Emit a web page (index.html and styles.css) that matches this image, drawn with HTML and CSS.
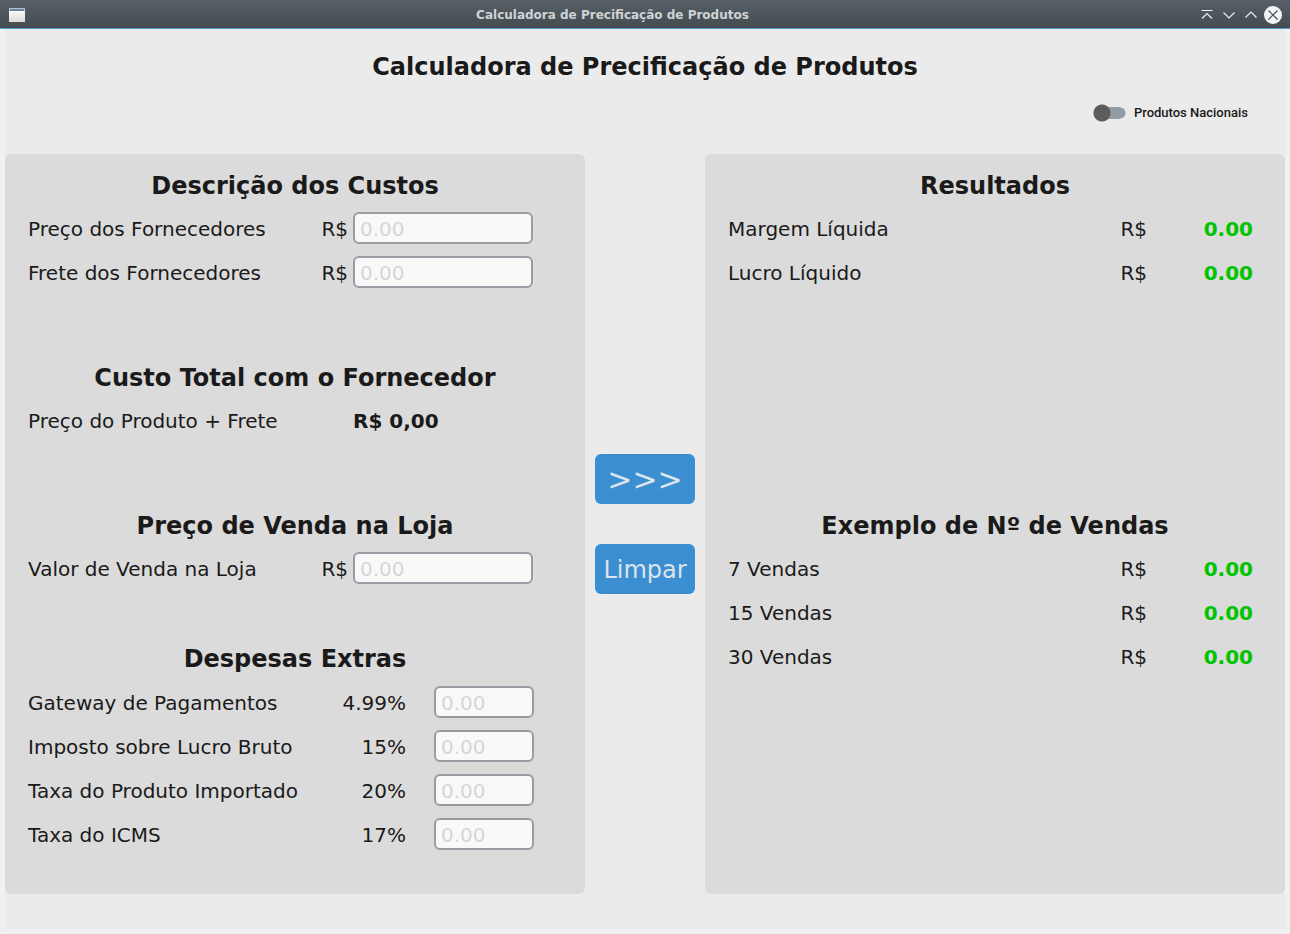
FILE: index.html
```html
<!DOCTYPE html>
<html lang="pt-BR">
<head>
<meta charset="utf-8">
<title>Calculadora de Precificação de Produtos</title>
<link rel="stylesheet" href="styles.css">
</head>
<body>
<div class="titlebar">
  <svg class="app-icon" width="16" height="14" viewBox="0 0 16 14" aria-hidden="true">
    <defs><linearGradient id="g" x1="0" y1="0" x2="0" y2="1"><stop offset="0" stop-color="#fff"/><stop offset="1" stop-color="#dcdcd8"/></linearGradient></defs>
    <rect width="16" height="14" fill="url(#g)"/><rect width="16" height="3" fill="#b4bed0"/><rect x="1" y="1" width="14" height="2" fill="#7080a0"/>
  </svg>
  <span class="titlebar-text">Calculadora de Precificação de Produtos</span>
  <div class="window-controls">
    <button type="button" aria-label="Manter acima"><svg width="18" height="18" viewBox="0 0 18 18"><path d="M3.5 4.5h11M4 12.5l5-5 5 5"/></svg></button>
    <button type="button" aria-label="Minimizar"><svg width="18" height="18" viewBox="0 0 18 18"><path d="M3.5 6.5l5.500 5.500 5.500-5.500"/></svg></button>
    <button type="button" aria-label="Maximizar"><svg width="18" height="18" viewBox="0 0 18 18"><path d="M3.500 11.500l5.500-5.500 5.500 5.500"/></svg></button>
    <button type="button" aria-label="Fechar"><svg width="18" height="18" viewBox="0 0 18 18"><circle cx="9" cy="9" r="9"/><path class="cross" d="M4.500 4.500l9 9M13.500 4.500l-9 9"/></svg></button>
  </div>
</div>
<main class="window">
  <header class="header">
    <h1>Calculadora de Precificação de Produtos</h1>
    <label class="switch"><input type="checkbox" role="switch"><span>Produtos Nacionais</span></label>
  </header>
  <form class="columns">
    <div class="panel">
      <section>
        <h2>Descrição dos Custos</h2>
        <div class="row"><label for="preco">Preço dos Fornecedores</label><span>R$</span><input id="preco" type="text" placeholder="0.00"></div>
        <div class="row"><label for="frete">Frete dos Fornecedores</label><span>R$</span><input id="frete" type="text" placeholder="0.00"></div>
      </section>
      <section>
        <h2>Custo Total com o Fornecedor</h2>
        <div class="row"><span>Preço do Produto + Frete</span><output class="total">R$ 0,00</output></div>
      </section>
      <section>
        <h2>Preço de Venda na Loja</h2>
        <div class="row"><label for="venda">Valor de Venda na Loja</label><span>R$</span><input id="venda" type="text" placeholder="0.00"></div>
      </section>
      <section class="extras">
        <h2>Despesas Extras</h2>
        <div class="row rate"><label for="gateway">Gateway de Pagamentos</label><span>4.99%</span><input id="gateway" type="text" placeholder="0.00"></div>
        <div class="row rate"><label for="imposto">Imposto sobre Lucro Bruto</label><span>15%</span><input id="imposto" type="text" placeholder="0.00"></div>
        <div class="row rate"><label for="taxa">Taxa do Produto Importado</label><span>20%</span><input id="taxa" type="text" placeholder="0.00"></div>
        <div class="row rate"><label for="icms">Taxa do ICMS</label><span>17%</span><input id="icms" type="text" placeholder="0.00"></div>
      </section>
    </div>
    <div class="actions">
      <button type="button" class="action calculate">&gt;&gt;&gt;</button>
      <button type="reset" class="action">Limpar</button>
    </div>
    <div class="panel results">
      <section>
        <h2>Resultados</h2>
        <div class="row"><span>Margem Líquida</span><span>R$</span><output>0.00</output></div>
        <div class="row"><span>Lucro Líquido</span><span>R$</span><output>0.00</output></div>
      </section>
      <section>
        <h2>Exemplo de Nº de Vendas</h2>
        <div class="row"><span>7 Vendas</span><span>R$</span><output>0.00</output></div>
        <div class="row"><span>15 Vendas</span><span>R$</span><output>0.00</output></div>
        <div class="row"><span>30 Vendas</span><span>R$</span><output>0.00</output></div>
      </section>
    </div>
  </form>
</main>
</body>
</html>
```
FILE: styles.css
```css
* { box-sizing: border-box; }
body {
  margin: 0;
  min-height: 100vh;
  display: flex;
  flex-direction: column;
  background: #eff0f1;
  color: #1a1a1a;
  font: 20px/28px "DejaVu Sans", sans-serif;
}
button, input { font: inherit; }
.titlebar {
  display: grid;
  grid-template-columns: 90px 1fr 90px;
  align-items: center;
  height: 29px;
  padding: 2px 8px 0 9px;
  background: linear-gradient(#566067, #444c51);
  border-bottom: 1px solid #4a9ccb;
}
.titlebar-text {
  color: #d0d3d5;
  font-weight: bold;
  font-size: 12px;
  line-height: 20px;
  text-align: center;
  padding-right: 66px;
}
.window-controls { display: flex; gap: 4px; justify-content: flex-end; }
.window-controls button { display: flex; padding: 0; border: 0; background: none; }
.window-controls path { fill: none; stroke: #eff0f1; stroke-width: 1.2; }
.window-controls circle { fill: #f3f4f5; }
.window-controls .cross { stroke: #444c51; }
.window {
  flex: 1;
  margin: 0 5px 4px;
  padding-bottom: 36px;
  background: #ebebeb;
}
.header { height: 125px; padding-top: 20px; }
h1, h2 { margin: 0; font-size: 24px; font-weight: bold; text-align: center; }
h1 { line-height: 36px; }
.switch {
  display: flex;
  align-items: center;
  justify-content: flex-end;
  gap: 8px;
  margin-top: 18px;
  padding-right: 37px;
  font: 500 13px/20px Roboto, sans-serif;
}
.switch input {
  appearance: none;
  width: 33px;
  height: 18px;
  margin: 0;
  background:
    radial-gradient(circle at 9px 9px, #5c5c5c 8px, transparent 9px),
    radial-gradient(circle at 27px 9px, #939ba2 5px, transparent 6px),
    linear-gradient(#939ba2, #939ba2) 9px 3px / 18px 12px no-repeat;
}
.columns { display: grid; grid-template-columns: 1fr 100px 1fr; gap: 10px; }
.panel {
  display: flex;
  flex-direction: column;
  gap: 60px;
  min-height: 740px;
  padding: 9px 0 36px;
  border-radius: 6px;
  background: #dbdbdb;
}
.results { gap: 208px; }
h2 { height: 44px; line-height: 46px; }
.extras { margin-top: -15px; }
.row {
  display: grid;
  grid-template-columns: 1fr 60px 180px;
  column-gap: 5px;
  align-items: center;
  height: 44px;
  padding: 0 52px 0 23px;
}
.extras h2 { height: 45px; }
.row > :nth-child(2) { text-align: right; }
.row .total { grid-column: 3; text-align: left; font-weight: bold; }
.row input {
  width: 100%;
  height: 32px;
  margin: 0 0 2px;
  padding: 2px 5px 0;
  border: 2px solid #979da2;
  border-radius: 6px;
  background: #f9f9fa;
  color: #1a1a1a;
}
.row input::placeholder { color: #d6d6d6; opacity: 1; }
.rate { grid-template-columns: 1fr 80px 100px; column-gap: 28px; padding-right: 51px; }
.results .row { grid-template-columns: 1fr 60px 50px; column-gap: 56px; padding-right: 32px; }
.results output { color: #00c400; font-weight: bold; text-align: right; }
.actions { display: flex; flex-direction: column; justify-content: center; gap: 40px; }
.action {
  height: 50px;
  padding: 2px 0 0;
  border: 0;
  border-radius: 6px;
  background: #3b8ed0;
  color: #dce4ee;
  font-size: 24px;
}
.calculate { font-size: 30px; }
```
